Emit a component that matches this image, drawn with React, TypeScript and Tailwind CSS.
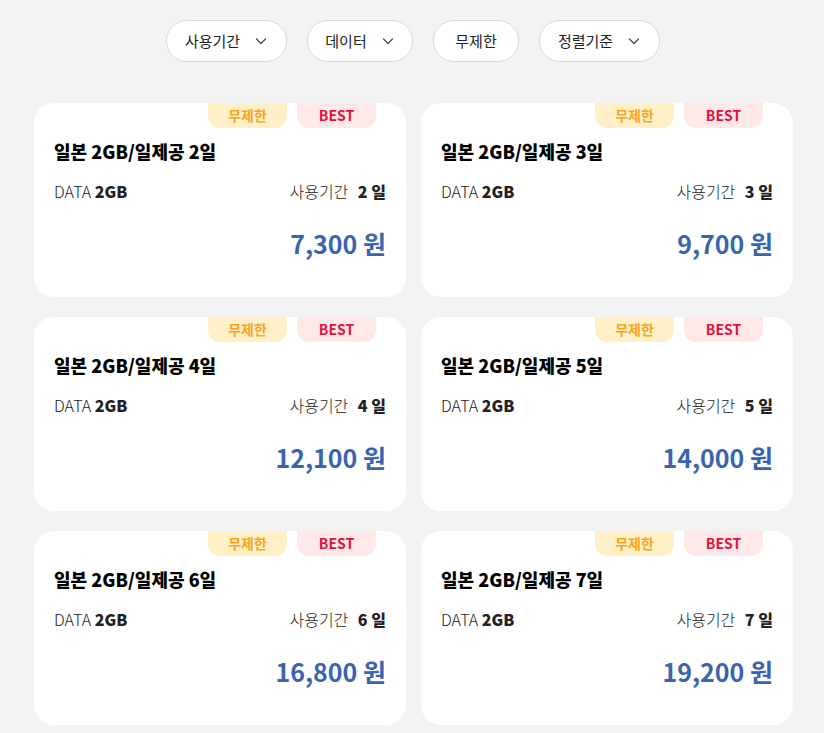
import React from "react";

const items = [
  { d: 2, p: "7,300" },
  { d: 3, p: "9,700" },
  { d: 4, p: "12,100" },
  { d: 5, p: "14,000" },
  { d: 6, p: "16,800" },
  { d: 7, p: "19,200" },
];

function Chevron() {
  return (
    <svg width="14" height="14" viewBox="0 0 14 14" fill="none" className="ml-[14px]">
      <path d="M2.5 5l4.5 4.5L11.5 5" stroke="#444" strokeWidth="1.2" strokeLinecap="round" strokeLinejoin="round" />
    </svg>
  );
}

function Filter({ label, chevron, w }: { label: string; chevron?: boolean; w: string }) {
  return (
    <button className={`h-[42px] ${w} flex items-center justify-center rounded-full bg-white border border-[#d9d9d9] text-[15px] text-[#222]`}>
      <span>{label}</span>
      {chevron && <Chevron />}
    </button>
  );
}

export default function App() {
  return (
    <div
      className="min-h-[733px] w-[824px] bg-[#f3f3f3] pt-[20px]"
      style={{ fontFamily: '"Noto Sans CJK KR", "Noto Sans", sans-serif' }}
    >
      <div className="flex justify-center gap-[20px] pl-[2px]">
        <Filter label="사용기간" chevron w="w-[121px]" />
        <Filter label="데이터" chevron w="w-[106px]" />
        <Filter label="무제한" w="w-[86px]" />
        <Filter label="정렬기준" chevron w="w-[121px]" />
      </div>
      <div className="grid grid-cols-[372px_372px] gap-x-[15px] gap-y-[20px] pl-[34px] mt-[41px]">
        {items.map((it) => (
          <div key={it.d} className="h-[194px] bg-white rounded-[20px] px-[20px] flex flex-col">
            <div className="flex justify-end gap-[10px] pr-[10px]">
              <span className="w-[79px] h-[25px] rounded-b-[12px] bg-[#fff0c7] text-[#f9a51a] text-[14px] font-bold flex items-center justify-center">
                무제한
              </span>
              <span className="w-[79px] h-[25px] rounded-b-[12px] bg-[#ffe8e8] text-[#e2103c] text-[14px] font-bold flex items-center justify-center">
                BEST
              </span>
            </div>
            <div className="mt-[9px] text-[18px] font-black text-black leading-[28px]">
              일본 2GB/일제공 {it.d}일
            </div>
            <div className="mt-[14px] flex justify-between text-[16px] text-[#222] leading-[24px]">
              <span className="font-light">
                DATA <b className="font-black">2GB</b>
              </span>
              <span className="font-light">
                사용기간 <b className="font-black ml-[6px]">{it.d} 일</b>
              </span>
            </div>
            <div className="mt-[23px] text-right text-[25px] font-bold text-[#3b64b0] leading-[34px]">
              {it.p} 원
            </div>
          </div>
        ))}
      </div>
    </div>
  );
}
